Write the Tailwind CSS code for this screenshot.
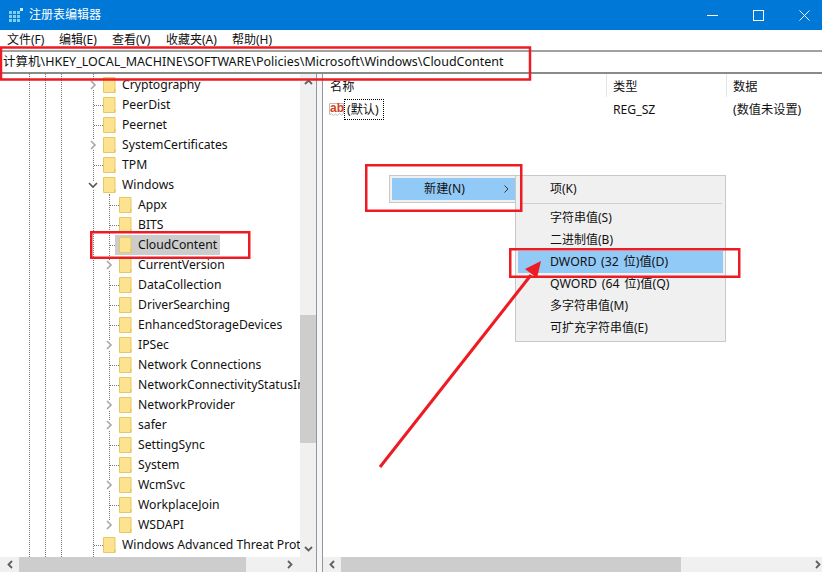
<!DOCTYPE html>
<html lang="zh">
<head>
    <title>注册表编辑器</title>
    <meta charset="utf-8">
    <script src="https://cdn.jsdelivr.net/npm/@tailwindcss/browser@4"></script>
</head>
<body class="relative w-[822px] h-[572px] overflow-hidden bg-white text-[#111] text-[12.2px] font-['Noto_Sans','Noto_Sans_CJK_SC',sans-serif]">

<!-- title bar -->
<div class="flex items-center h-[30px] bg-[#0078d7] text-white">
    <svg class="ml-[9px] w-[14px] h-[14px]" viewBox="0 0 14 14" fill="#7fd0f0">
        <rect x="0" y="3" width="3" height="3"/><rect x="4" y="3" width="3" height="3"/><rect x="8" y="3" width="3" height="3"/>
        <rect x="0" y="7" width="3" height="3"/><rect x="4" y="7" width="3" height="3"/><rect x="8" y="7" width="3" height="3"/>
        <rect x="0" y="11" width="3" height="3"/><rect x="4" y="11" width="3" height="3"/><rect x="8" y="11" width="3" height="3"/>
        <rect x="11" y="0" width="3" height="3" fill="#c8ecf8"/>
    </svg>
    <span class="ml-[6px] text-[12px]">注册表编辑器</span>
    <div class="ml-auto flex items-center gap-[35px] mr-[12px]">
        <svg class="w-[11px] h-[11px]" viewBox="0 0 11 11" stroke="white" fill="none"><path d="M0 5.5H11"/></svg>
        <svg class="w-[11px] h-[11px]" viewBox="0 0 11 11" stroke="white" fill="none"><rect x="0.5" y="0.5" width="10" height="10"/></svg>
        <svg class="w-[11px] h-[11px]" viewBox="0 0 11 11" stroke="white" fill="none"><path d="M0.5 0.5L10.5 10.5M10.5 0.5L0.5 10.5"/></svg>
    </div>
</div>

<!-- menu bar -->
<div class="flex items-center h-[20px] text-[12px]">
    <span class="ml-[7px] w-[52px]">文件(F)</span>
    <span class="w-[53px]">编辑(E)</span>
    <span class="w-[54px]">查看(V)</span>
    <span class="w-[66px]">收藏夹(A)</span>
    <span>帮助(H)</span>
</div>

<!-- address bar -->
<div class="flex items-center h-[24px] pl-[3px] border-t-2 border-b-2 border-t-[#a0a0a0] border-b-[#8a8a8a] text-[12.5px]">计算机\HKEY_LOCAL_MACHINE\SOFTWARE\Policies\Microsoft\Windows\CloudContent</div>

<div class="flex h-[498px]">
    <!-- tree pane -->
    <div class="flex flex-col w-[317px] border-r border-[#8f98a0]">
        <div class="flex flex-1 min-h-0">
            <div class="relative w-[300px] overflow-hidden pt-px">
                <!-- guide lines -->
                <div class="absolute top-0 bottom-0 left-[29px] border-l border-dotted border-[#777]"></div>
                <div class="absolute top-0 bottom-0 left-[45px] border-l border-dotted border-[#777]"></div>
                <div class="absolute top-0 bottom-0 left-[61px] border-l border-dotted border-[#777]"></div>
                <div class="absolute top-0 bottom-0 left-[93px] border-l border-dotted border-[#777]"></div>
                <div class="absolute top-[120px] h-[330px] left-[109px] border-l border-dotted border-[#777]"></div>

                <div id="tree" class="relative">
                    <div class="flex items-center h-[20px] pl-[89px]"><svg class="w-[9px] h-[10px] shrink-0 bg-white" viewBox="0 0 9 10" fill="none" stroke="#a6a6a6" stroke-width="1.6"><path d="M2 1l4 4-4 4"/></svg><svg class="ml-[5px] w-[13px] h-[16px] shrink-0" viewBox="0 0 13 16"><path d="M.5.5h11.5v15H.5z" fill="#fde38f" stroke="#e8c860"/><path d="M11 12h1.5v3.500H11z" fill="#e8c860"/></svg><span class="ml-[6px]">Cryptography</span></div>
                    <div class="flex items-center h-[20px] pl-[94px]"><span class="w-[9px] shrink-0 border-t border-dotted border-[#777]"></span><svg class="w-[13px] h-[16px] shrink-0" viewBox="0 0 13 16"><path d="M.5.5h11.5v15H.5z" fill="#fde38f" stroke="#e8c860"/><path d="M11 12h1.5v3.500H11z" fill="#e8c860"/></svg><span class="ml-[6px]">PeerDist</span></div>
                    <div class="flex items-center h-[20px] pl-[94px]"><span class="w-[9px] shrink-0 border-t border-dotted border-[#777]"></span><svg class="w-[13px] h-[16px] shrink-0" viewBox="0 0 13 16"><path d="M.5.5h11.5v15H.5z" fill="#fde38f" stroke="#e8c860"/><path d="M11 12h1.5v3.500H11z" fill="#e8c860"/></svg><span class="ml-[6px]">Peernet</span></div>
                    <div class="flex items-center h-[20px] pl-[89px]"><svg class="w-[9px] h-[10px] shrink-0 bg-white" viewBox="0 0 9 10" fill="none" stroke="#a6a6a6" stroke-width="1.6"><path d="M2 1l4 4-4 4"/></svg><svg class="ml-[5px] w-[13px] h-[16px] shrink-0" viewBox="0 0 13 16"><path d="M.5.5h11.5v15H.5z" fill="#fde38f" stroke="#e8c860"/><path d="M11 12h1.5v3.500H11z" fill="#e8c860"/></svg><span class="ml-[6px]">SystemCertificates</span></div>
                    <div class="flex items-center h-[20px] pl-[94px]"><span class="w-[9px] shrink-0 border-t border-dotted border-[#777]"></span><svg class="w-[13px] h-[16px] shrink-0" viewBox="0 0 13 16"><path d="M.5.5h11.5v15H.5z" fill="#fde38f" stroke="#e8c860"/><path d="M11 12h1.5v3.500H11z" fill="#e8c860"/></svg><span class="ml-[6px]">TPM</span></div>
                    <div class="flex items-center h-[20px] pl-[88px]"><svg class="w-[10px] h-[9px] shrink-0 bg-white" viewBox="0 0 10 9" fill="none" stroke="#555" stroke-width="1.6"><path d="M1 2l4 4 4-4"/></svg><svg class="ml-[5px] w-[13px] h-[16px] shrink-0" viewBox="0 0 13 16"><path d="M.5.5h11.5v15H.5z" fill="#fde38f" stroke="#e8c860"/><path d="M11 12h1.5v3.500H11z" fill="#e8c860"/></svg><span class="ml-[6px]">Windows</span></div>
                    <div class="flex items-center h-[20px] pl-[110px]"><span class="w-[9px] shrink-0 border-t border-dotted border-[#777]"></span><svg class="w-[13px] h-[16px] shrink-0" viewBox="0 0 13 16"><path d="M.5.5h11.5v15H.5z" fill="#fde38f" stroke="#e8c860"/><path d="M11 12h1.5v3.500H11z" fill="#e8c860"/></svg><span class="ml-[6px]">Appx</span></div>
                    <div class="flex items-center h-[20px] pl-[110px]"><span class="w-[9px] shrink-0 border-t border-dotted border-[#777]"></span><svg class="w-[13px] h-[16px] shrink-0" viewBox="0 0 13 16"><path d="M.5.5h11.5v15H.5z" fill="#fde38f" stroke="#e8c860"/><path d="M11 12h1.5v3.500H11z" fill="#e8c860"/></svg><span class="ml-[6px]">BITS</span></div>
                    <div class="flex items-center h-[20px] pl-[110px]"><span class="w-[5px] shrink-0 border-t border-dotted border-[#777]"></span><div class="flex items-center h-[20px] pl-[4px] pr-[3px] bg-[#cccccc]"><svg class="w-[13px] h-[16px] shrink-0" viewBox="0 0 13 16"><path d="M.5.5h11.5v15H.5z" fill="#fde38f" stroke="#e8c860"/><path d="M11 12h1.5v3.500H11z" fill="#e8c860"/></svg><span class="ml-[6px]">CloudContent</span></div></div>
                    <div class="flex items-center h-[20px] pl-[105px]"><svg class="w-[9px] h-[10px] shrink-0 bg-white" viewBox="0 0 9 10" fill="none" stroke="#a6a6a6" stroke-width="1.6"><path d="M2 1l4 4-4 4"/></svg><svg class="ml-[5px] w-[13px] h-[16px] shrink-0" viewBox="0 0 13 16"><path d="M.5.5h11.5v15H.5z" fill="#fde38f" stroke="#e8c860"/><path d="M11 12h1.5v3.500H11z" fill="#e8c860"/></svg><span class="ml-[6px]">CurrentVersion</span></div>
                    <div class="flex items-center h-[20px] pl-[110px]"><span class="w-[9px] shrink-0 border-t border-dotted border-[#777]"></span><svg class="w-[13px] h-[16px] shrink-0" viewBox="0 0 13 16"><path d="M.5.5h11.5v15H.5z" fill="#fde38f" stroke="#e8c860"/><path d="M11 12h1.5v3.500H11z" fill="#e8c860"/></svg><span class="ml-[6px]">DataCollection</span></div>
                    <div class="flex items-center h-[20px] pl-[110px]"><span class="w-[9px] shrink-0 border-t border-dotted border-[#777]"></span><svg class="w-[13px] h-[16px] shrink-0" viewBox="0 0 13 16"><path d="M.5.5h11.5v15H.5z" fill="#fde38f" stroke="#e8c860"/><path d="M11 12h1.5v3.500H11z" fill="#e8c860"/></svg><span class="ml-[6px]">DriverSearching</span></div>
                    <div class="flex items-center h-[20px] pl-[110px]"><span class="w-[9px] shrink-0 border-t border-dotted border-[#777]"></span><svg class="w-[13px] h-[16px] shrink-0" viewBox="0 0 13 16"><path d="M.5.5h11.5v15H.5z" fill="#fde38f" stroke="#e8c860"/><path d="M11 12h1.5v3.500H11z" fill="#e8c860"/></svg><span class="ml-[6px]">EnhancedStorageDevices</span></div>
                    <div class="flex items-center h-[20px] pl-[105px]"><svg class="w-[9px] h-[10px] shrink-0 bg-white" viewBox="0 0 9 10" fill="none" stroke="#a6a6a6" stroke-width="1.6"><path d="M2 1l4 4-4 4"/></svg><svg class="ml-[5px] w-[13px] h-[16px] shrink-0" viewBox="0 0 13 16"><path d="M.5.5h11.5v15H.5z" fill="#fde38f" stroke="#e8c860"/><path d="M11 12h1.5v3.500H11z" fill="#e8c860"/></svg><span class="ml-[6px]">IPSec</span></div>
                    <div class="flex items-center h-[20px] pl-[110px]"><span class="w-[9px] shrink-0 border-t border-dotted border-[#777]"></span><svg class="w-[13px] h-[16px] shrink-0" viewBox="0 0 13 16"><path d="M.5.5h11.5v15H.5z" fill="#fde38f" stroke="#e8c860"/><path d="M11 12h1.5v3.500H11z" fill="#e8c860"/></svg><span class="ml-[6px]">Network Connections</span></div>
                    <div class="flex items-center h-[20px] pl-[110px]"><span class="w-[9px] shrink-0 border-t border-dotted border-[#777]"></span><svg class="w-[13px] h-[16px] shrink-0" viewBox="0 0 13 16"><path d="M.5.5h11.5v15H.5z" fill="#fde38f" stroke="#e8c860"/><path d="M11 12h1.5v3.500H11z" fill="#e8c860"/></svg><span class="ml-[6px] whitespace-nowrap">NetworkConnectivityStatusIndicator</span></div>
                    <div class="flex items-center h-[20px] pl-[105px]"><svg class="w-[9px] h-[10px] shrink-0 bg-white" viewBox="0 0 9 10" fill="none" stroke="#a6a6a6" stroke-width="1.6"><path d="M2 1l4 4-4 4"/></svg><svg class="ml-[5px] w-[13px] h-[16px] shrink-0" viewBox="0 0 13 16"><path d="M.5.5h11.5v15H.5z" fill="#fde38f" stroke="#e8c860"/><path d="M11 12h1.5v3.500H11z" fill="#e8c860"/></svg><span class="ml-[6px]">NetworkProvider</span></div>
                    <div class="flex items-center h-[20px] pl-[105px]"><svg class="w-[9px] h-[10px] shrink-0 bg-white" viewBox="0 0 9 10" fill="none" stroke="#a6a6a6" stroke-width="1.6"><path d="M2 1l4 4-4 4"/></svg><svg class="ml-[5px] w-[13px] h-[16px] shrink-0" viewBox="0 0 13 16"><path d="M.5.5h11.5v15H.5z" fill="#fde38f" stroke="#e8c860"/><path d="M11 12h1.5v3.500H11z" fill="#e8c860"/></svg><span class="ml-[6px]">safer</span></div>
                    <div class="flex items-center h-[20px] pl-[110px]"><span class="w-[9px] shrink-0 border-t border-dotted border-[#777]"></span><svg class="w-[13px] h-[16px] shrink-0" viewBox="0 0 13 16"><path d="M.5.5h11.5v15H.5z" fill="#fde38f" stroke="#e8c860"/><path d="M11 12h1.5v3.500H11z" fill="#e8c860"/></svg><span class="ml-[6px]">SettingSync</span></div>
                    <div class="flex items-center h-[20px] pl-[110px]"><span class="w-[9px] shrink-0 border-t border-dotted border-[#777]"></span><svg class="w-[13px] h-[16px] shrink-0" viewBox="0 0 13 16"><path d="M.5.5h11.5v15H.5z" fill="#fde38f" stroke="#e8c860"/><path d="M11 12h1.5v3.500H11z" fill="#e8c860"/></svg><span class="ml-[6px]">System</span></div>
                    <div class="flex items-center h-[20px] pl-[105px]"><svg class="w-[9px] h-[10px] shrink-0 bg-white" viewBox="0 0 9 10" fill="none" stroke="#a6a6a6" stroke-width="1.6"><path d="M2 1l4 4-4 4"/></svg><svg class="ml-[5px] w-[13px] h-[16px] shrink-0" viewBox="0 0 13 16"><path d="M.5.5h11.5v15H.5z" fill="#fde38f" stroke="#e8c860"/><path d="M11 12h1.5v3.500H11z" fill="#e8c860"/></svg><span class="ml-[6px]">WcmSvc</span></div>
                    <div class="flex items-center h-[20px] pl-[110px]"><span class="w-[9px] shrink-0 border-t border-dotted border-[#777]"></span><svg class="w-[13px] h-[16px] shrink-0" viewBox="0 0 13 16"><path d="M.5.5h11.5v15H.5z" fill="#fde38f" stroke="#e8c860"/><path d="M11 12h1.5v3.500H11z" fill="#e8c860"/></svg><span class="ml-[6px]">WorkplaceJoin</span></div>
                    <div class="flex items-center h-[20px] pl-[105px]"><svg class="w-[9px] h-[10px] shrink-0 bg-white" viewBox="0 0 9 10" fill="none" stroke="#a6a6a6" stroke-width="1.6"><path d="M2 1l4 4-4 4"/></svg><svg class="ml-[5px] w-[13px] h-[16px] shrink-0" viewBox="0 0 13 16"><path d="M.5.5h11.5v15H.5z" fill="#fde38f" stroke="#e8c860"/><path d="M11 12h1.5v3.500H11z" fill="#e8c860"/></svg><span class="ml-[6px]">WSDAPI</span></div>
                    <div class="flex items-center h-[20px] pl-[94px]"><span class="w-[9px] shrink-0 border-t border-dotted border-[#777]"></span><svg class="w-[13px] h-[16px] shrink-0" viewBox="0 0 13 16"><path d="M.5.5h11.5v15H.5z" fill="#fde38f" stroke="#e8c860"/><path d="M11 12h1.5v3.500H11z" fill="#e8c860"/></svg><span class="ml-[6px] whitespace-nowrap">Windows Advanced Threat Protection</span></div>
                </div>
            </div>
            <!-- tree vertical scrollbar -->
            <div class="flex flex-col items-center w-[16px] bg-[#f0f0f0]">
                <svg class="mt-[5px] w-[9px] h-[6px]" viewBox="0 0 9 6" fill="none" stroke="#606060" stroke-width="1.8"><path d="M1 5l3.500-3.500L8 5"/></svg>
                <div class="mt-[230px] w-full h-[128px] bg-[#cdcdcd]"></div>
                <svg class="mt-auto mb-[5px] w-[9px] h-[6px]" viewBox="0 0 9 6" fill="none" stroke="#606060" stroke-width="1.8"><path d="M1 1l3.500 3.500L8 1"/></svg>
            </div>
        </div>
        <!-- tree horizontal scrollbar -->
        <div class="flex items-center h-[15px] bg-[#f0f0f0]">
            <svg class="ml-[7px] w-[6px] h-[9px]" viewBox="0 0 6 9" fill="none" stroke="#606060" stroke-width="1.8"><path d="M5 1L1.500 4.500 5 8"/></svg>
            <div class="ml-[6px] w-[227px] h-full bg-[#cdcdcd]"></div>
            <svg class="ml-[41px] w-[6px] h-[9px]" viewBox="0 0 6 9" fill="none" stroke="#606060" stroke-width="1.8"><path d="M1 1l3.500 3.500L1 8"/></svg>
        </div>
    </div>

    <!-- splitter -->
    <div class="w-[6px] border-r border-[#8f98a0] bg-[#f6f6f6]"></div>

    <!-- values pane -->
    <div class="flex flex-col flex-1 min-w-0">
        <div class="flex h-[23px] items-center">
            <span class="pl-[7px] pt-[4px] w-[284px] border-r border-[#e5e5e5] h-full flex items-center">名称</span>
            <span class="pl-[6px] pt-[4px] w-[120px] border-r border-[#e5e5e5] h-full flex items-center">类型</span>
            <span class="pl-[6px] pt-[4px]">数据</span>
        </div>
        <div class="flex items-center h-[24px] pt-px">
            <div class="flex items-center w-[284px] shrink-0">
                <svg class="ml-[6px] w-[15px] h-[16px] shrink-0" viewBox="0 0 15 16">
                    <path d="M.5 1.500h14v10l-2 1.500-2-1.500-2 2-2-1.500-2 1.500-2-1.500-2 .5z" fill="#fff" stroke="#bdbdbd"/>
                    <text x="1" y="10" font-family="'Liberation Sans',sans-serif" font-size="12" font-weight="700" fill="#d4411e">ab</text>
                </svg>
                <span class="flex items-center h-[21px] pt-[2px] px-[2px] w-[40px] whitespace-nowrap border border-dotted border-black">(默认)</span>
            </div>
            <span class="pl-[6px] pt-[2px] w-[120px] shrink-0">REG_SZ</span>
            <span class="pl-[6px] pt-[2px] whitespace-nowrap">(数值未设置)</span>
        </div>
        <!-- values horizontal scrollbar -->
        <div class="mt-auto flex items-center h-[15px] bg-[#f0f0f0]">
            <svg class="ml-[6px] w-[6px] h-[9px]" viewBox="0 0 6 9" fill="none" stroke="#606060" stroke-width="1.8"><path d="M5 1L1.500 4.500 5 8"/></svg>
            <div class="ml-[6px] w-[340px] h-full bg-[#cdcdcd]"></div>
            <svg class="ml-auto mr-[1px] w-[6px] h-[9px]" viewBox="0 0 6 9" fill="none" stroke="#606060" stroke-width="1.8"><path d="M1 1l3.500 3.500L1 8"/></svg>
        </div>
    </div>
</div>

<!-- context menu: new -->
<div class="absolute left-[389px] top-[175px] w-[127px] h-[28px] py-[2px] pl-[2px] bg-[#f0f0f0] border border-[#c8c8c8] border-r-0">
    <div class="flex items-center h-full bg-[#91c9f7] pl-[32px] text-[12.2px]">新建(N)
        <svg class="ml-auto mr-[7px] w-[5px] h-[8px]" viewBox="0 0 5 8" fill="none" stroke="#333"><path d="M.5.5L4 4 .5 7.500"/></svg>
    </div>
</div>

<!-- context menu: sub -->
<div class="absolute left-[515px] top-[175px] w-[211px] h-[167px] p-[2px] bg-[#f0f0f0] border border-[#c8c8c8] text-[12px]">
    <div class="flex items-center h-[22px] pl-[32px]">项(K)</div>
    <div class="mx-[1px] my-[3px] ml-[2px] h-px bg-[#d0d0d0]"></div>
    <div class="flex items-center h-[22px] pl-[32px]">字符串值(S)</div>
    <div class="flex items-center h-[22px] pl-[32px]">二进制值(B)</div>
    <div class="flex items-center h-[22px] pl-[32px] bg-[#91c9f7] [word-spacing:1.500px] text-[12.3px]">DWORD (32 位)值(D)</div>
    <div class="flex items-center h-[22px] pl-[32px] [word-spacing:1.500px] text-[12.3px]">QWORD (64 位)值(Q)</div>
    <div class="flex items-center h-[22px] pl-[32px]">多字符串值(M)</div>
    <div class="flex items-center h-[22px] pl-[32px]">可扩充字符串值(E)</div>
</div>

<!-- red annotations -->
<svg class="absolute left-0 top-0 w-[822px] h-[572px] pointer-events-none" viewBox="0 0 822 572" fill="none" stroke="#ed1c24" stroke-width="2.500">
    <rect x="1" y="47.500" width="529" height="32"/>
    <rect x="91.250" y="232.250" width="158" height="25.500"/>
    <rect x="366.250" y="165.250" width="155" height="45.500"/>
    <rect x="510.250" y="249.250" width="229" height="27.500"/>
    <path d="M380 467L531 275" stroke-width="3"/>
    <path d="M541 261L525 269 537 278z" fill="#ed1c24" stroke="none"/>
</svg>

</body>
</html>
